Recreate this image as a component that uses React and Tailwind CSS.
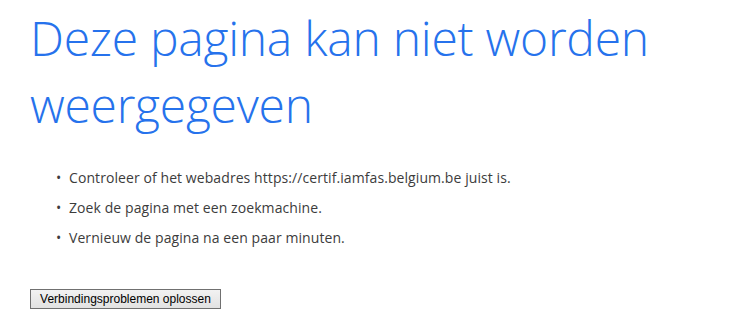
export default function App() {
  return (
    <div className="w-[752px] h-[332px] bg-white overflow-hidden pl-[30px] pt-[4px]">
      <h1
        className="text-[#2672ec] font-light text-[48px] leading-[67px] w-[700px] tracking-[-0.25px]"
        style={{ fontFamily: '"Open Sans", sans-serif' }}
      >
        Deze pagina kan niet worden weergegeven
      </h1>
      <ul
        className="mt-[25px] pl-[26px] text-[#3c3c3c] text-[14px] leading-[30px] tracking-[0.08px]"
        style={{ fontFamily: '"Open Sans", sans-serif' }}
      >
        <li className="flex"><span className="w-[13px]">•</span>Controleer of het webadres https://certif.iamfas.belgium.be juist is.</li>
        <li className="flex"><span className="w-[13px]">•</span>Zoek de pagina met een zoekmachine.</li>
        <li className="flex"><span className="w-[13px]">•</span>Vernieuw de pagina na een paar minuten.</li>
      </ul>
      <button
        className="mt-[36px] h-[20px] w-[191px] border border-[#707070] bg-gradient-to-b from-[#f2f2f2] to-[#e2e2e2] text-[12px] text-black leading-[18px]"
        style={{ fontFamily: '"Liberation Sans", Arial, sans-serif' }}
      >
        Verbindingsproblemen oplossen
      </button>
    </div>
  );
}
